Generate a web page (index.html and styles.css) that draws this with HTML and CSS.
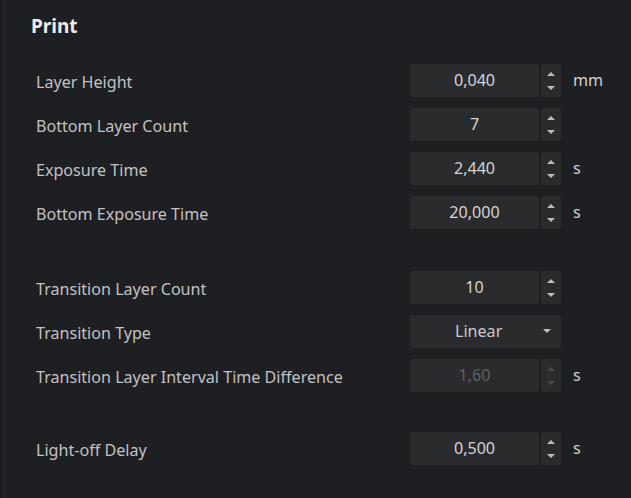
FILE: index.html
```html
<!DOCTYPE html>
<html>
<head>
<meta charset="utf-8">
<link rel="stylesheet" href="styles.css">
</head>
<body>
<div class="panel">
  <h1 class="title">Print</h1>
  <div class="group">
    <div class="row"><span class="label">Layer Height</span><div class="box">0,040</div><div class="spin"><i class="up"></i><i class="down"></i></div><span class="unit">mm</span></div>
    <div class="row"><span class="label">Bottom Layer Count</span><div class="box">7</div><div class="spin"><i class="up"></i><i class="down"></i></div><span class="unit"></span></div>
    <div class="row"><span class="label">Exposure Time</span><div class="box">2,440</div><div class="spin"><i class="up"></i><i class="down"></i></div><span class="unit">s</span></div>
    <div class="row"><span class="label">Bottom Exposure Time</span><div class="box">20,000</div><div class="spin"><i class="up"></i><i class="down"></i></div><span class="unit">s</span></div>
  </div>
  <div class="group g2">
    <div class="row"><span class="label">Transition Layer Count</span><div class="box">10</div><div class="spin"><i class="up"></i><i class="down"></i></div><span class="unit"></span></div>
    <div class="row"><span class="label">Transition Type</span><div class="select"><span class="sel-text">Linear</span><i class="down"></i></div><span class="unit"></span></div>
    <div class="row disabled"><span class="label">Transition Layer Interval Time Difference</span><div class="box">1,60</div><div class="spin"><i class="up"></i><i class="down"></i></div><span class="unit">s</span></div>
  </div>
  <div class="group g3">
    <div class="row"><span class="label">Light-off Delay</span><div class="box">0,500</div><div class="spin"><i class="up"></i><i class="down"></i></div><span class="unit">s</span></div>
  </div>
</div>
</body>
</html>
```
FILE: styles.css
```css
html, body {
  margin: 0;
  padding: 0;
  background: #1e1f22;
  height: 100%;
}
body {
  font-family: "Noto Sans", "Open Sans", sans-serif;
  color: #c9c9c9;
}
.panel {
  margin-left: 4px;
  border-left: 1px solid #2d2e32;
  min-height: 498px;
  box-sizing: border-box;
  padding: 12px 0 0 29px;
}
.title {
  margin: 0 0 0 -3px;
  font-size: 19px;
  font-weight: 700;
  color: #ececec;
  line-height: 28px;
}
.group {
  margin-top: 18px;
}
.g2 { margin-top: 31px; }
.g3 { margin-top: 29px; }
.row {
  display: grid;
  grid-template-columns: 374px 129px 20px auto;
  column-gap: 2px;
  height: 44px;
  align-items: center;
  font-size: 16.1px;
}
.label {
  padding-left: 2px;
  color: #c2c2c2;
  position: relative;
  top: 2px;
}
.box {
  height: 33px;
  background: #2a2b2d;
  border-radius: 2px;
  display: flex;
  align-items: center;
  justify-content: center;
  color: #d4d4d4;
  padding-bottom: 1px;
  box-sizing: border-box;
}
.spin {
  height: 33px;
  background: #2a2b2d;
  border-radius: 2px;
  display: flex;
  flex-direction: column;
  align-items: center;
  justify-content: space-between;
  padding: 8px 0 7px;
  box-sizing: border-box;
}
.up {
  display: block;
  width: 0; height: 0;
  border-left: 4px solid transparent;
  border-right: 4px solid transparent;
  border-bottom: 4px solid #bdbdbd;
}
.down {
  display: block;
  width: 0; height: 0;
  border-left: 4px solid transparent;
  border-right: 4px solid transparent;
  border-top: 4px solid #bdbdbd;
}
.unit {
  padding-left: 10px;
  color: #d0d0d0;
}
.select {
  grid-column: 2 / 4;
  height: 33px;
  background: #2a2b2d;
  border-radius: 2px;
  display: flex;
  align-items: center;
  justify-content: space-between;
  padding: 0 10px 0 45px;
  box-sizing: border-box;
  color: #c9c9c9;
}
.disabled .box { color: #5e5f61; }
.disabled .up { border-bottom-color: #4a4b4d; }
.disabled .down { border-top-color: #4a4b4d; }
```
